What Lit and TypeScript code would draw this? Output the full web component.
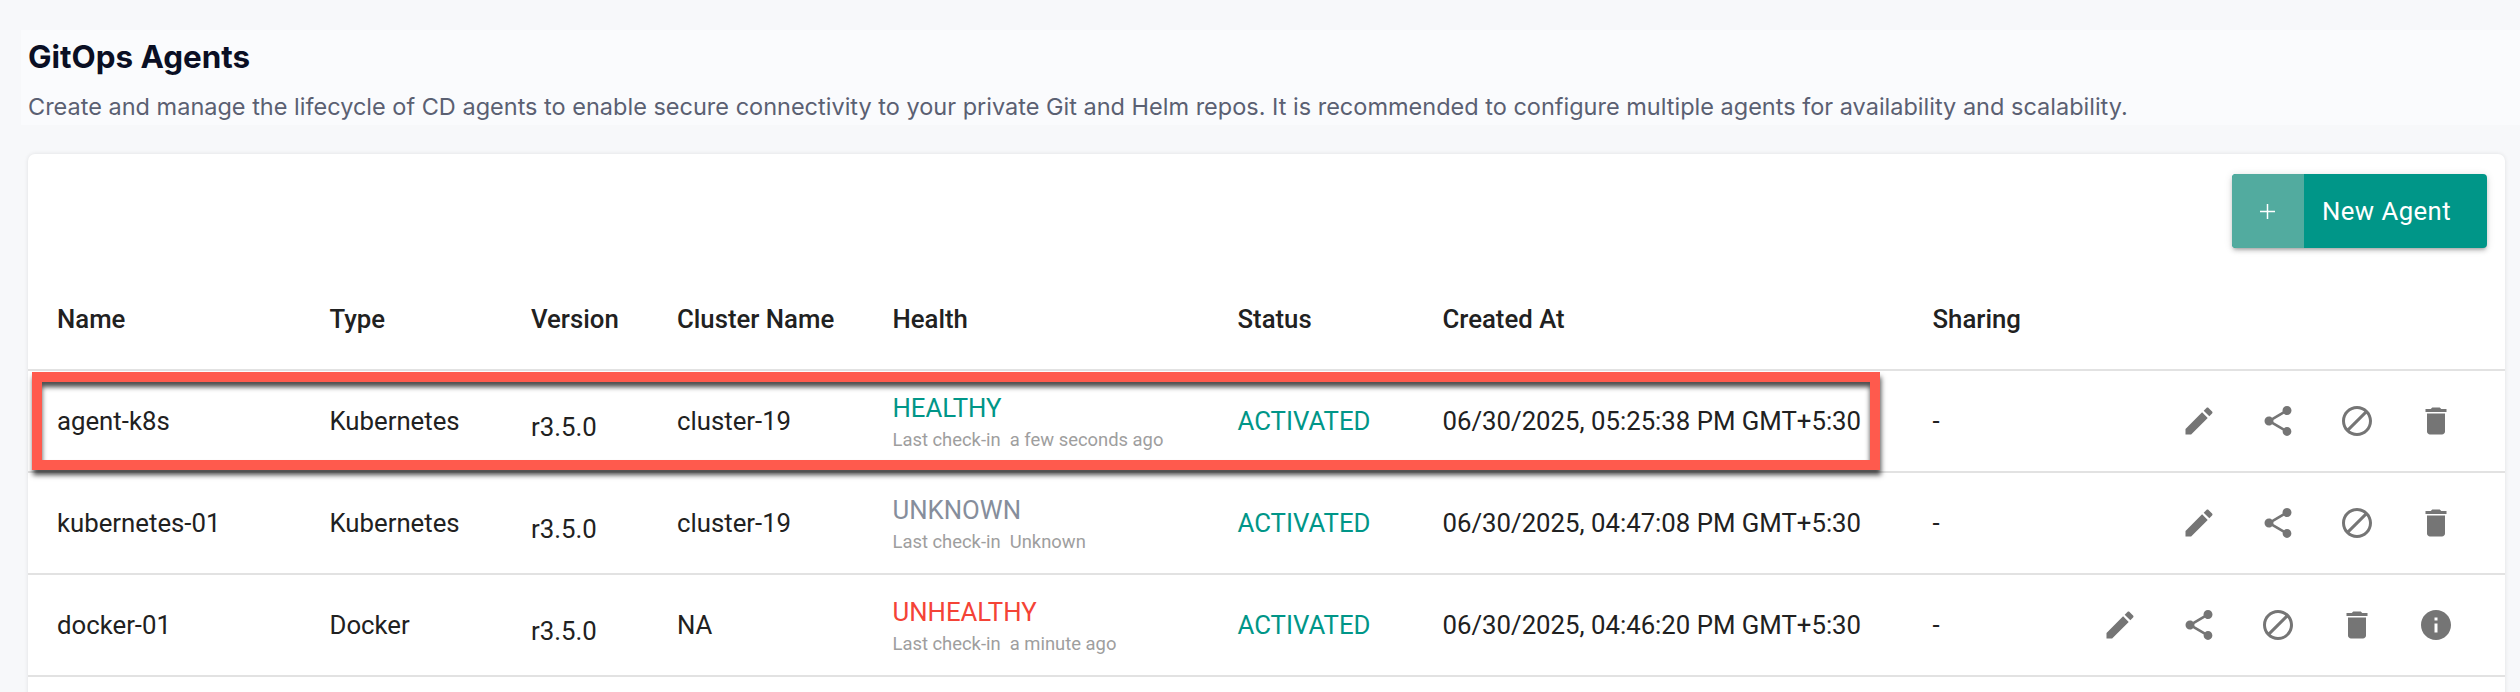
import { LitElement, html, css, svg } from 'lit';
import { customElement } from 'lit/decorators.js';

interface Agent {
  name: string;
  type: string;
  version: string;
  cluster: string;
  health: string;
  healthClass: string;
  checkIn: string;
  createdAt: string;
  info?: boolean;
}

const AGENTS: Agent[] = [
  { name: 'agent-k8s', type: 'Kubernetes', version: 'r3.5.0', cluster: 'cluster-19', health: 'HEALTHY', healthClass: 'healthy', checkIn: 'a few seconds ago', createdAt: '06/30/2025, 05:25:38 PM GMT+5:30' },
  { name: 'kubernetes-01', type: 'Kubernetes', version: 'r3.5.0', cluster: 'cluster-19', health: 'UNKNOWN', healthClass: 'unknown', checkIn: 'Unknown', createdAt: '06/30/2025, 04:47:08 PM GMT+5:30' },
  { name: 'docker-01', type: 'Docker', version: 'r3.5.0', cluster: 'NA', health: 'UNHEALTHY', healthClass: 'unhealthy', checkIn: 'a minute ago', createdAt: '06/30/2025, 04:46:20 PM GMT+5:30', info: true },
];

const ICONS = {
  edit: 'M3 17.25V21h3.75L17.81 9.94l-3.75-3.75L3 17.25zM20.71 7.04c.39-.39.39-1.02 0-1.41l-2.34-2.34c-.39-.39-1.02-.39-1.41 0l-1.83 1.83 3.75 3.75 1.83-1.83z',
  share: 'M18 16.08c-.76 0-1.44.3-1.96.77L8.91 12.7c.05-.23.09-.46.09-.7s-.04-.47-.09-.7l7.05-4.11c.54.5 1.25.81 2.04.81 1.66 0 3-1.34 3-3s-1.34-3-3-3-3 1.34-3 3c0 .24.04.47.09.7L8.04 9.81C7.5 9.31 6.79 9 6 9c-1.66 0-3 1.34-3 3s1.34 3 3 3c.79 0 1.5-.31 2.04-.81l7.12 4.16c-.05.21-.08.43-.08.65 0 1.61 1.31 2.92 2.92 2.92 1.61 0 2.92-1.31 2.92-2.92s-1.31-2.92-2.92-2.92z',
  block: 'M12 2C6.48 2 2 6.48 2 12s4.48 10 10 10 10-4.48 10-10S17.52 2 12 2zM4 12c0-4.42 3.58-8 8-8 1.85 0 3.55.63 4.9 1.69L5.69 16.9C4.63 15.55 4 13.85 4 12zm8 8c-1.85 0-3.55-.63-4.9-1.69L18.31 7.1C19.37 8.45 20 10.15 20 12c0 4.42-3.58 8-8 8z',
  trash: 'M6 19c0 1.1.9 2 2 2h8c1.1 0 2-.9 2-2V7H6v12zM19 4h-3.5l-1-1h-5l-1 1H5v2h14V4z',
  info: 'M12 2C6.48 2 2 6.48 2 12s4.48 10 10 10 10-4.48 10-10S17.52 2 12 2zm1 15h-2v-6h2v6zm0-8h-2V7h2v2z',
};

@customElement('app-root')
export class AppRoot extends LitElement {
  static styles = css`
    :host {
      display: block;
      height: 692px;
      overflow: hidden;
      background: #f7f8fa;
      font-family: Roboto, sans-serif;
      color: #212121;
    }

    * {
      box-sizing: border-box;
    }

    .page-head {
      margin: 30px 0 0 21px;
      height: 95px;
      padding-left: 7px;
      background: #fafbfd;
      display: flow-root;
    }

    .page-head h1 {
      margin: 0;
      padding-top: 7px;
      font-family: Inter, sans-serif;
      font-size: 31.4px;
      line-height: 40px;
      font-weight: 700;
      color: #0a0f24;
    }

    .page-head p {
      margin: 14px 0 0;
      font-family: Inter, sans-serif;
      font-size: 23.5px;
      line-height: 32px;
      color: #5a6072;
      white-space: nowrap;
    }

    .card {
      position: relative;
      margin: 29px 15px 0 28px;
      height: 560px;
      background: #fff;
      border-radius: 7px 7px 0 0;
      box-shadow: 0 0 4px rgba(0, 0, 0, 0.1);
    }

    .toolbar {
      display: flex;
      justify-content: flex-end;
      padding: 20px 18px 0 0;
      height: 114px;
    }

    .new-agent {
      display: flex;
      width: 255px;
      height: 74px;
      border-radius: 4px;
      overflow: hidden;
      background: #009688;
      color: #fff;
      font-size: 25.7px;
      letter-spacing: 0.45px;
      box-shadow: 0 3px 3px -2px rgba(0, 0, 0, 0.2), 0 3px 4px rgba(0, 0, 0, 0.14), 0 1px 8px rgba(0, 0, 0, 0.12);
    }

    .new-agent .plus {
      width: 72px;
      padding-right: 2px;
      display: flex;
      align-items: center;
      justify-content: center;
      background: #52ab9f;
    }

    .new-agent .label {
      flex: 1;
      display: flex;
      align-items: center;
      padding-left: 18px;
      padding-bottom: 1px;
    }

    .row {
      display: grid;
      grid-template-columns: 272.5px 201.5px 146px 215.5px 345px 205px 490px 1fr;
      align-items: center;
      padding-left: 29px;
      height: 102px;
      border-bottom: 2px solid #e2e2e2;
      font-size: 25.75px;
      position: relative;
    }

    .row.head {
      height: 103px;
      font-weight: 500;
      padding-bottom: 0;
    }

    .version {
      padding-top: 12px;
    }

    .health {
      display: flex;
      flex-direction: column;
      padding-top: 4px;
    }

    .health .state {
      line-height: 33px;
    }

    .health small {
      font-size: 18.4px;
      line-height: 30px;
      color: #9e9e9e;
      white-space: pre;
    }

    .healthy {
      color: #009688;
    }

    .unknown {
      color: #868e9c;
    }

    .unhealthy {
      color: #f44336;
    }

    .activated {
      color: #009688;
    }

    .actions {
      position: absolute;
      right: 51px;
      top: 0;
      bottom: 0;
      display: flex;
      align-items: center;
      gap: 43px;
    }

    .actions svg {
      display: block;
      width: 36px;
      height: 36px;
      fill: #757575;
    }

    .callout {
      position: absolute;
      left: 4px;
      top: 218px;
      width: 1848px;
      height: 98px;
      border: 10px solid #ff5a4d;
      box-shadow: 1px 5px 5px rgba(0, 0, 0, 0.7), inset 0 5px 5px rgba(0, 0, 0, 0.7);
      pointer-events: none;
    }
  `;

  private icon(path: string) {
    return html`<svg viewBox="0 0 24 24">${svg`<path d=${path}></path>`}</svg>`;
  }

  private renderRow(agent: Agent) {
    return html`
      <div class="row">
        <div>${agent.name}</div>
        <div>${agent.type}</div>
        <div class="version">${agent.version}</div>
        <div>${agent.cluster}</div>
        <div class="health">
          <span class="state ${agent.healthClass}">${agent.health}</span>
          <small>Last check-in  ${agent.checkIn}</small>
        </div>
        <div class="activated">ACTIVATED</div>
        <div>${agent.createdAt}</div>
        <div>-</div>
        <div class="actions">
          ${this.icon(ICONS.edit)}
          ${this.icon(ICONS.share)}
          ${this.icon(ICONS.block)}
          ${this.icon(ICONS.trash)}
          ${agent.info ? this.icon(ICONS.info) : ''}
        </div>
      </div>
    `;
  }

  render() {
    return html`
      <div class="page-head">
        <h1>GitOps Agents</h1>
        <p>Create and manage the lifecycle of CD agents to enable secure connectivity to your private Git and Helm repos. It is recommended to configure multiple agents for availability and scalability.</p>
      </div>
      <div class="card">
        <div class="toolbar">
          <div class="new-agent">
            <span class="plus">
              <svg width="15" height="15" viewBox="0 0 15 15"><path d="M7.5 0v15M0 7.5h15" stroke="#fff" stroke-width="1.5" fill="none"></path></svg>
            </span>
            <span class="label">New Agent</span>
          </div>
        </div>
        <div class="row head">
          <div>Name</div>
          <div>Type</div>
          <div>Version</div>
          <div>Cluster Name</div>
          <div>Health</div>
          <div>Status</div>
          <div>Created At</div>
          <div>Sharing</div>
        </div>
        ${AGENTS.map((a) => this.renderRow(a))}
        <div class="callout"></div>
      </div>
    `;
  }
}
